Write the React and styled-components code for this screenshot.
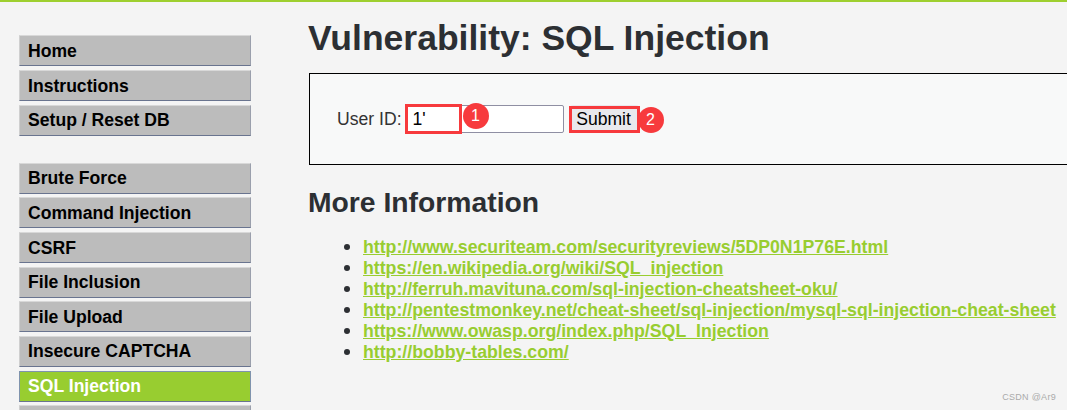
import React from "react";
import styled, { createGlobalStyle } from "styled-components";

const Global = createGlobalStyle`
  html, body { margin: 0; padding: 0; background: #f4f4f4; overflow: hidden; }
  body { font-family: "Liberation Sans", Arial, sans-serif; }
`;

const Page = styled.div`
  width: 1067px;
  height: 410px;
  overflow: hidden;
  position: relative;
  border-top: 2px solid #9ecf2f;
  box-sizing: border-box;
  display: flex;
  background: #f4f4f4;
`;

const Sidebar = styled.nav`
  width: 232px;
  margin-left: 19px;
  padding-top: 33.4px;
  flex: none;
  display: flex;
  flex-direction: column;
`;

const MenuGroup = styled.div`
  display: flex;
  flex-direction: column;
  gap: 3.67px;
  margin-bottom: 27px;
`;

const MenuItem = styled.a`
  display: flex;
  align-items: center;
  box-sizing: border-box;
  height: 31px;
  padding: 1px 0 0 8px;
  font-size: 17.6px;
  font-weight: 700;
  color: ${(p) => (p.$active ? "#fff" : "#000")};
  background: ${(p) => (p.$active ? "#98cd30" : "#bcbcbc")};
  border-top: 1px solid ${(p) => (p.$active ? "#7f93ad" : "#d8d8d8")};
  border-bottom: 1px solid #69748f;
  border-left: 1px solid ${(p) => (p.$active ? "#7f93ad" : "#cfcfcf")};
  border-right: 1px solid ${(p) => (p.$active ? "#7f93ad" : "#9a9fac")};
`;

const Main = styled.main`
  margin-left: 58px;
  flex: 1;
  min-width: 0;
`;

const Title = styled.h1`
  margin: 16px 0 0 -1px;
  font-size: 35.5px;
  line-height: 40px;
  font-weight: 700;
  color: #2c2f33;
`;

const FormBox = styled.div`
  margin-top: 15px;
  height: 92px;
  width: 800px;
  box-sizing: border-box;
  border: 1px solid #000;
  background: #f8f9f9;
  display: flex;
  align-items: center;
  padding-left: 27px;
`;

const Label = styled.label`
  font-size: 17.6px;
  color: #333;
`;

const FieldWrap = styled.span`
  position: relative;
  display: inline-flex;
  margin-left: 5px;
`;

const Input = styled.div`
  box-sizing: border-box;
  width: 157px;
  height: 28px;
  background: #fff;
  border: 1px solid #8f8fa3;
  border-radius: 2px;
  font-size: 17.6px;
  color: #000;
  display: flex;
  align-items: center;
  padding-left: 5px;
`;

const SubmitWrap = styled.span`
  position: relative;
  display: inline-flex;
  margin-left: 6px;
`;

const Submit = styled.button`
  box-sizing: border-box;
  width: 69px;
  height: 28px;
  padding: 0 1px 0 0;
  background: #e9e9ed;
  border: 0;
  border-radius: 3px;
  font: 17.6px "Liberation Sans", Arial, sans-serif;
  color: #000;
`;

const Highlight = styled.span`
  position: absolute;
  box-sizing: border-box;
  border: 3px solid #f73a3d;
  left: ${(p) => p.$l}px;
  top: ${(p) => p.$t}px;
  width: ${(p) => p.$w}px;
  height: ${(p) => p.$h}px;
`;

const Badge = styled.span`
  position: absolute;
  left: ${(p) => p.$l}px;
  top: ${(p) => p.$t}px;
  width: 26px;
  height: 26px;
  border-radius: 50%;
  background: #f73a3d;
  color: #fff;
  font-size: 16px;
  display: flex;
  align-items: center;
  justify-content: center;
`;

const Subtitle = styled.h2`
  margin: 20px 0 0 -1px;
  font-size: 28.3px;
  line-height: 34px;
  font-weight: 700;
  color: #2c2f33;
`;

const Links = styled.ul`
  margin: 15.6px 0 0;
  padding: 0 0 0 54px;
  list-style: disc;
  color: #2c2f33;
`;

const LinkItem = styled.li`
  height: 21px;
  font-size: 17.73px;
  line-height: 21px;
  &::marker {
    font-size: 21px;
  }
`;

const LinkText = styled.a`
  color: #98cd30;
  font-weight: 700;
  text-decoration: underline;
  white-space: nowrap;
`;

const Watermark = styled.span`
  position: absolute;
  right: 11px;
  bottom: 8px;
  font-size: 9px;
  letter-spacing: 0.3px;
  color: #aaa;
`;

const top = ["Home", "Instructions", "Setup / Reset DB"];
const vulns = [
  "Brute Force",
  "Command Injection",
  "CSRF",
  "File Inclusion",
  "File Upload",
  "Insecure CAPTCHA",
  "SQL Injection",
  "",
];
const links = [
  "http://www.securiteam.com/securityreviews/5DP0N1P76E.html",
  "https://en.wikipedia.org/wiki/SQL_injection",
  "http://ferruh.mavituna.com/sql-injection-cheatsheet-oku/",
  "http://pentestmonkey.net/cheat-sheet/sql-injection/mysql-sql-injection-cheat-sheet",
  "https://www.owasp.org/index.php/SQL_Injection",
  "http://bobby-tables.com/",
];

export default function App() {
  return (
    <>
      <Global />
      <Page>
        <Sidebar>
          <MenuGroup>
            {top.map((t) => (
              <MenuItem key={t}>{t}</MenuItem>
            ))}
          </MenuGroup>
          <MenuGroup>
            {vulns.map((t) => (
              <MenuItem key={t} $active={t === "SQL Injection"}>
                {t}
              </MenuItem>
            ))}
          </MenuGroup>
        </Sidebar>
        <Main>
          <Title>Vulnerability: SQL Injection</Title>
          <FormBox>
            <Label>User ID:</Label>
            <FieldWrap>
              <Input>1'</Input>
              <Highlight $l={-2} $t={-1} $w={57} $h={30} />
              <Badge $l={56} $t={-2}>1</Badge>
            </FieldWrap>
            <SubmitWrap>
              <Submit>Submit</Submit>
              <Highlight $l={-1} $t={1} $w={71} $h={27} />
              <Badge $l={68} $t={2}>2</Badge>
            </SubmitWrap>
          </FormBox>
          <Subtitle>More Information</Subtitle>
          <Links>
            {links.map((l) => (
              <LinkItem key={l}>
                <LinkText>{l}</LinkText>
              </LinkItem>
            ))}
          </Links>
        </Main>
        <Watermark>CSDN @Ar9</Watermark>
      </Page>
    </>
  );
}
